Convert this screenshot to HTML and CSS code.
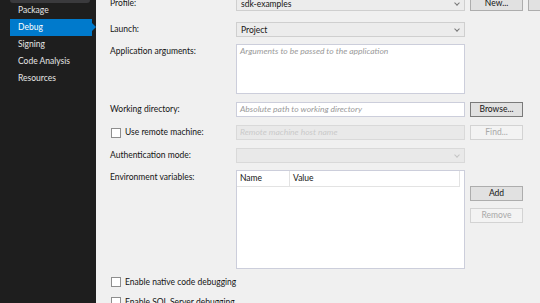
FILE: index.html
```html
<!DOCTYPE html>
<html lang="en">
<head>
    <meta charset="UTF-8">
    <meta name="viewport" content="width=device-width, initial-scale=1.0">
    <title>Debug</title>
    <link rel="stylesheet" href="styles.css">
</head>
<body>
    <div class="sidebar">
        <div class="sidebar-top"></div>
        <ul class="nav">
            <li>Package</li>
            <li class="active">Debug</li>
            <li>Signing</li>
            <li>Code Analysis</li>
            <li>Resources</li>
        </ul>
    </div>
    <div class="main">
        <div class="row row-profile">
            <label class="label">Profile:</label>
            <div class="combo"><span>sdk-examples</span><i class="chev"></i></div>
            <button class="btn">New...</button>
            <button class="btn"></button>
        </div>
        <div class="row row-launch">
            <label class="label">Launch:</label>
            <div class="combo"><span>Project</span><i class="chev"></i></div>
        </div>
        <div class="row row-args">
            <label class="label">Application arguments:</label>
            <div class="textarea"><span class="placeholder">Arguments to be passed to the application</span></div>
        </div>
        <div class="row">
            <label class="label">Working directory:</label>
            <div class="input"><span class="placeholder">Absolute path to working directory</span></div>
            <button class="btn btn-focus">Browse...</button>
        </div>
        <div class="row">
            <label class="label label-check"><span class="box"></span>Use remote machine:</label>
            <div class="input disabled"><span class="placeholder">Remote machine host name</span></div>
            <button class="btn" disabled>Find...</button>
        </div>
        <div class="row row-auth">
            <label class="label">Authentication mode:</label>
            <div class="combo disabled"><span></span><i class="chev"></i></div>
        </div>
        <div class="row row-env">
            <label class="label">Environment variables:</label>
            <div class="list">
                <div class="list-head">
                    <div class="col-name">Name</div>
                    <div class="col-value">Value</div>
                </div>
            </div>
            <div class="list-buttons">
                <button class="btn">Add</button>
                <button class="btn" disabled>Remove</button>
            </div>
        </div>
        <div class="check-row">
            <span class="box"></span>Enable native code debugging
        </div>
        <div class="check-row">
            <span class="box"></span>Enable SQL Server debugging
        </div>
    </div>
</body>
</html>
```

FILE: styles.css
```css
*{
    margin: 0;
    padding: 0;
    box-sizing: border-box;
}
body {
    width: 540px;
    height: 303px;
    overflow: hidden;
    display: flex;
    font-family: Lato, "Noto Sans", sans-serif;
    font-size: 8.5px;
    color: #141414;
    background-color: #f0f0f0;
}
/* 左侧导航 */
.sidebar {
    width: 96px;
    flex: none;
    background-color: #1e1e1e;
}
.sidebar-top {
    height: 3px;
    margin: 0 6px 0 10px;
    background-color: #3a3a3d;
    border-radius: 0 0 3px 3px;
}
.nav {
    list-style: none;
    margin-top: -1px;
}
.nav li {
    position: relative;
    height: 17px;
    line-height: 17px;
    margin-left: 10px;
    margin-right: 4px;
    padding-left: 8px;
    color: #e6e6e6;
}
.nav li.active {
    background-color: #007acc;
    color: #fff;
}
.nav li.active::after {
    content: '';
    position: absolute;
    right: -4px;
    top: 4px;
    border-top: 4px solid transparent;
    border-bottom: 4px solid transparent;
    border-left: 4px solid #007acc;
}
/* 右侧表单 */
.main {
    flex: 1;
    padding-left: 14px;
    margin-top: -4px;
}
.row {
    display: flex;
    align-items: flex-start;
    height: 23px;
}
.row-profile {
    height: 26px;
}
.row-launch {
    height: 22px;
}
.row-args {
    height: 58px;
}
.row-auth {
    height: 22px;
}
.row-env {
    height: 102px;
}
.label {
    width: 126px;
    flex: none;
    line-height: 15px;
    display: flex;
    align-items: center;
}
.label-check {
    margin-left: 1px;
    width: 125px;
}
.box {
    width: 10px;
    height: 10px;
    border: 1px solid #8e8e8e;
    background-color: #fff;
    margin-right: 4px;
    flex: none;
}
.combo, .input, .textarea, .list {
    width: 229px;
    flex: none;
    border: 1px solid #cccedb;
    background-color: #fff;
    margin-right: 5px;
}
.combo {
    height: 15px;
    display: flex;
    align-items: center;
    justify-content: space-between;
    padding: 0 4px;
    background-color: #ececec;
    border-color: #cfcfcf;
}
.chev {
    width: 4px;
    height: 4px;
    border-right: 1px solid #777;
    border-bottom: 1px solid #777;
    transform: rotate(45deg);
    margin-top: -2px;
    margin-right: 1px;
}
.input {
    height: 15px;
    padding: 0 3px;
    line-height: 13px;
}
.textarea {
    height: 50px;
    padding: 0 3px;
    line-height: 13px;
}
.placeholder {
    font-style: italic;
    color: #9a9a9a;
}
.disabled {
    background-color: #e9e9e9;
    border-color: #d9d9d9;
}
.disabled .placeholder {
    color: #cacaca;
}
.disabled .chev {
    border-color: #c4c4c4;
}
.btn {
    width: 53px;
    height: 15px;
    flex: none;
    margin-right: 5px;
    font-family: inherit;
    font-size: 8.5px;
    line-height: 13px;
    color: #141414;
    background-color: #e1e1e1;
    border: 1px solid #adadad;
}
.btn-focus {
    border-color: #7a7a7a;
}
.btn:disabled {
    color: #a8a8a8;
    background-color: #f3f3f3;
    border-color: #d3d3d3;
}
.list {
    height: 99px;
}
.list-head {
    display: flex;
    height: 16px;
    line-height: 15px;
    border-bottom: 1px solid #e3e3e3;
    margin-right: 4px;
}
.col-name {
    width: 53px;
    padding-left: 3px;
    border-right: 1px solid #e3e3e3;
}
.col-value {
    flex: 1;
    padding-left: 3px;
    border-right: 1px solid #e3e3e3;
}
.list-buttons {
    display: flex;
    flex-direction: column;
    gap: 7px;
    padding-top: 16px;
}
.check-row {
    display: flex;
    align-items: center;
    height: 20px;
    padding-left: 1px;
}
```
